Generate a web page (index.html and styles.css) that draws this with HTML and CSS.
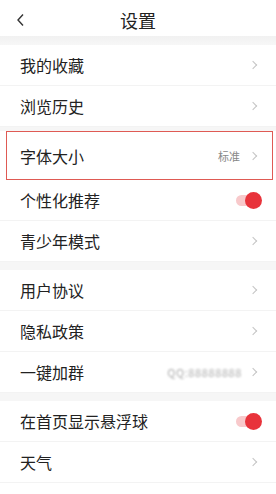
FILE: index.html
```html
<!DOCTYPE html>
<html lang="zh">
<head>
<meta charset="utf-8">
<link rel="stylesheet" href="styles.css">
</head>
<body>
<div class="page">
  <header class="header">
    <svg class="back" width="10" height="14" viewBox="0 0 10 14"><polyline points="7,1.5 2,7 7,12.5" fill="none" stroke="#333" stroke-width="1.4"/></svg>
    <div class="title">设置</div>
  </header>
  <div class="gap g1"></div>
  <div class="row"><span class="label">我的收藏</span><span class="chev"></span></div>
  <div class="row"><span class="label">浏览历史</span><span class="chev"></span></div>
  <div class="gap g2"></div>
  <div class="row tall boxed"><span class="label">字体大小</span><span class="val">标准</span><span class="chev"></span></div>
  <div class="row"><span class="label">个性化推荐</span><span class="toggle"><span class="knob"></span></span></div>
  <div class="row"><span class="label">青少年模式</span><span class="chev"></span></div>
  <div class="gap"></div>
  <div class="row"><span class="label">用户协议</span><span class="chev"></span></div>
  <div class="row"><span class="label">隐私政策</span><span class="chev"></span></div>
  <div class="row"><span class="label">一键加群</span><span class="blur">QQ:88888888</span><span class="chev"></span></div>
  <div class="gap"></div>
  <div class="row"><span class="label">在首页显示悬浮球</span><span class="toggle"><span class="knob"></span></span></div>
  <div class="row"><span class="label">天气</span><span class="chev"></span></div>
  <div class="row"><span class="label"></span></div>
</div>
</body>
</html>
```
FILE: styles.css
```css
* { box-sizing: border-box; }
html, body { margin: 0; padding: 0; background: #fff; }
body { font-family: "Noto Sans CJK SC", "Noto Sans", sans-serif; color: #222; }
.page { width: 276px; height: 494px; overflow: hidden; }
.header { height: 36px; position: relative; display: flex; align-items: center; justify-content: center; }
.back { position: absolute; left: 16px; top: 13px; }
.title { font-size: 18px; color: #222; line-height: 1; margin-top: 4px; }
.gap { height: 8px; background: #f6f6f6; }
.g1 { height: 9px; background: linear-gradient(#f1f1f1, #f7f7f7); }
.g2 { height: 4px; }
.row { height: 41px; display: flex; align-items: center; padding: 0 18px 0 20px; border-bottom: 1px solid #f3f3f3; }
.row.tall { height: 49px; }
.boxed { border: 1.5px solid #df5a54; margin: 0 3px 0 6px; padding-left: 13px; padding-right: 14px; }
.label { font-size: 16px; flex: 1; line-height: 1; }
.val { font-size: 11px; color: #888; margin-right: 10px; }
.chev { width: 6px; height: 6px; border-top: 1px solid #c4c4c4; border-right: 1px solid #c4c4c4; transform: rotate(45deg); margin-right: 2px; }
.toggle { width: 22px; height: 11px; border-radius: 6px; background: #f8c9cb; position: relative; margin-right: 0; }
.knob { position: absolute; right: -4px; top: -3px; width: 17px; height: 17px; border-radius: 50%; background: #e8333b; }
.blur { font-size: 11px; color: #aaa; filter: blur(1.2px); margin-right: 8px; letter-spacing: 0.6px; }
```
